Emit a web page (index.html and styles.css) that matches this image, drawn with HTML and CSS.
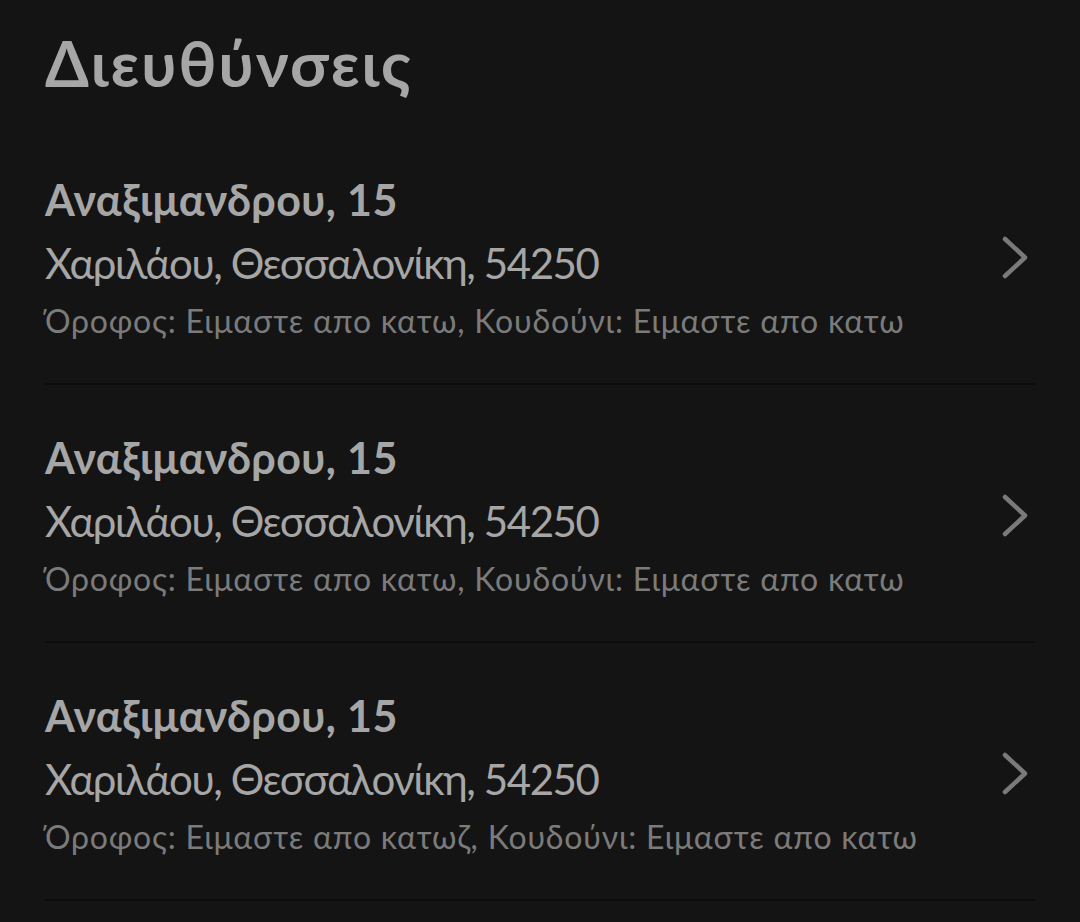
FILE: index.html
```html
<!DOCTYPE html>
<html lang="el">
<head>
    <meta charset="UTF-8">
    <meta name="viewport" content="width=device-width, initial-scale=1.0">
    <title>Διευθύνσεις</title>
    <link rel="stylesheet" href="styles.css">
</head>
<body>
    <h1 class="page-title">Διευθύνσεις</h1>

    <ul class="address-list">
        <li class="address-item">
            <div class="address-text">
                <div class="address-street">Αναξιμανδρου, 15</div>
                <div class="address-area">Χαριλάου, Θεσσαλονίκη, 54250</div>
                <div class="address-notes">Όροφος: Ειμαστε απο κατω, Κουδούνι: Ειμαστε απο κατω</div>
            </div>
            <svg class="chevron" width="26" height="44" viewBox="0 0 26 44"><path d="M3 3 L23 21.5 L3 40" /></svg>
        </li>
        <li class="address-item">
            <div class="address-text">
                <div class="address-street">Αναξιμανδρου, 15</div>
                <div class="address-area">Χαριλάου, Θεσσαλονίκη, 54250</div>
                <div class="address-notes">Όροφος: Ειμαστε απο κατω, Κουδούνι: Ειμαστε απο κατω</div>
            </div>
            <svg class="chevron" width="26" height="44" viewBox="0 0 26 44"><path d="M3 3 L23 21.5 L3 40" /></svg>
        </li>
        <li class="address-item">
            <div class="address-text">
                <div class="address-street">Αναξιμανδρου, 15</div>
                <div class="address-area">Χαριλάου, Θεσσαλονίκη, 54250</div>
                <div class="address-notes">Όροφος: Ειμαστε απο κατωζ, Κουδούνι: Ειμαστε απο κατω</div>
            </div>
            <svg class="chevron" width="26" height="44" viewBox="0 0 26 44"><path d="M3 3 L23 21.5 L3 40" /></svg>
        </li>
    </ul>
</body>
</html>
```

FILE: styles.css
```css
body {
    font-family: Lato, "Noto Sans", sans-serif;
    background-color: #141414;
    margin: 0;
    padding: 31px 45px 0;
    overflow: hidden;
}

.page-title {
    margin: 0 0 33px;
    font-size: 63px;
    line-height: 1;
    font-weight: 700;
    letter-spacing: 2px;
    color: #a6a6a6;
}

.address-list {
    list-style: none;
    margin: 0;
    padding: 0;
}

.address-item {
    display: flex;
    align-items: center;
    justify-content: space-between;
    padding: 51px 0 46px;
    border-bottom: 2px solid #0d0d0d;
}

.address-text {
    display: flex;
    flex-direction: column;
    gap: 21px;
}

.address-street {
    font-size: 43px;
    line-height: 1;
    font-weight: 700;
    letter-spacing: 0.4px;
    color: #a6a6a6;
}

.address-area {
    font-size: 42px;
    line-height: 1;
    letter-spacing: -1.4px;
    color: #a6a6a6;
}

.address-notes {
    font-size: 32px;
    line-height: 1;
    letter-spacing: 0.8px;
    color: #7b7b7b;
}

.chevron {
    flex-shrink: 0;
    margin-right: 7px;
}

.chevron path {
    fill: none;
    stroke: #7a7a7a;
    stroke-width: 4.5;
    stroke-linecap: round;
    stroke-linejoin: round;
}
```
